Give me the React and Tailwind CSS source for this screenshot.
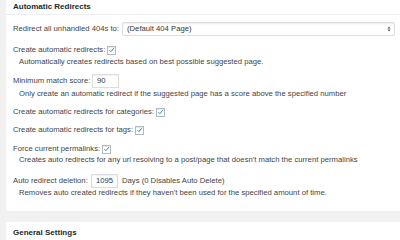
import React from 'react';

const Check = () => (
  <span className="ml-[2px] inline-flex h-[9px] w-[9px] items-center justify-center border border-[#b4b9be] bg-white shadow-[inset_0_1px_1px_rgba(0,0,0,0.1)]">
    <svg viewBox="0 0 10 10" className="h-[8px] w-[8px]">
      <path d="M2 5.2 L4.2 7.4 L8.2 2.4" fill="none" stroke="#1e8cbe" strokeWidth="1.4" />
    </svg>
  </span>
);

const CheckRow = ({ label, className = '' }) => (
  <div className={`flex h-[10px] items-center ${className}`}>
    <span>{label}</span>
    <Check />
  </div>
);

const Desc = ({ children, className = '' }) => (
  <div className={`flex h-[10px] items-center whitespace-nowrap pl-[6px] ${className}`}>{children}</div>
);

export default function App() {
  return (
    <div
      className="h-[240px] w-[400px] overflow-hidden bg-[#f1f1f1] pl-[6px] text-[7.7px] text-[#444]"
      style={{ fontFamily: '"Liberation Sans", Arial, sans-serif' }}
    >
      {/* Automatic Redirects panel */}
      <div className="bg-white pb-[13px]">
        <div className="flex h-[15px] items-center border-b border-[#eee] pl-[7px] text-[8px] font-bold text-[#23282d]">
          Automatic Redirects
        </div>
        <div className="pl-[7px] pr-[5px]">
          <div className="mt-[7px] flex h-[14px] items-center">
            <span className="w-[109px] shrink-0">Redirect all unhandled 404s to:</span>
            <div className="flex h-[14px] flex-1 items-center justify-between rounded-[2px] border border-[#ddd] pl-[4px] pr-[3px] text-[#32373c] shadow-[inset_0_1px_2px_rgba(0,0,0,0.07)]">
              <span>(Default 404 Page)</span>
              <svg viewBox="0 0 6 10" className="h-[6px] w-[4px]">
                <path d="M0.5 4 L3 1 L5.5 4 Z M0.5 6 L3 9 L5.5 6 Z" fill="#555" />
              </svg>
            </div>
          </div>

          <CheckRow label="Create automatic redirects:" className="mt-[9px]" />
          <Desc className="mt-[2px]">Automatically creates redirects based on best possible suggested page.</Desc>

          <div className="mt-[7px] flex h-[14px] items-center">
            <span className="w-[79px] shrink-0">Minimum match score:</span>
            <div className="flex h-[14px] w-[27px] items-center border border-[#ddd] pl-[4px] text-[#32373c] shadow-[inset_0_1px_2px_rgba(0,0,0,0.07)]">
              90
            </div>
          </div>
          <Desc className="mt-[1px]">
            Only create an automatic redirect if the suggested page has a score above the specified number
          </Desc>

          <CheckRow label="Create automatic redirects for categories:" className="mt-[8px]" />
          <CheckRow label="Create automatic redirects for tags:" className="mt-[8px]" />
          <CheckRow label="Force current permalinks:" className="mt-[9px]" />
          <Desc className="mt-[1px]">
            Creates auto redirects for any url resolving to a post/page that doesn't match the current permalinks
          </Desc>

          <div className="mt-[9px] flex h-[14px] items-center">
            <span className="w-[78px] shrink-0">Auto redirect deletion:</span>
            <div className="flex h-[14px] w-[27px] items-center border border-[#ddd] pl-[4px] text-[#32373c] shadow-[inset_0_1px_2px_rgba(0,0,0,0.07)]">
              1095
            </div>
            <span className="ml-[4px]">Days (0 Disables Auto Delete)</span>
          </div>
          <Desc>Removes auto created redirects if they haven't been used for the specified amount of time.</Desc>
        </div>
      </div>

      {/* General Settings panel */}
      <div className="mt-[11px] h-[40px] bg-white">
        <div className="flex h-[22px] items-center border-b border-[#eee] pl-[7px] text-[8px] font-bold text-[#23282d]">
          General Settings
        </div>
      </div>
    </div>
  );
}
